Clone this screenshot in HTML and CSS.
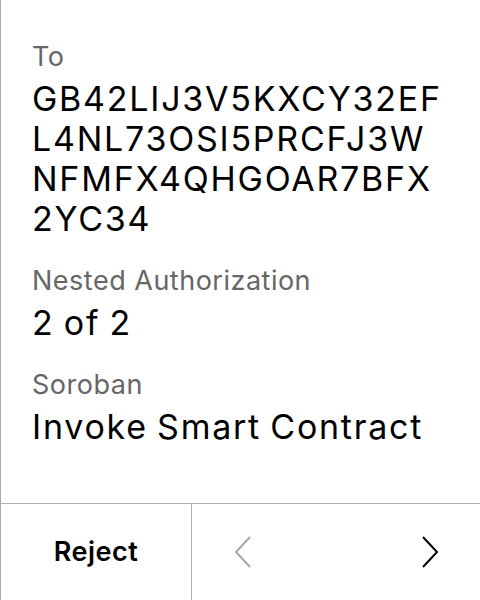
FILE: index.html
```html
<!DOCTYPE html>
<html>
<head>
<meta charset="utf-8">
<link rel="stylesheet" href="styles.css">
</head>
<body>
<div class="screen">
  <div class="content">
    <div class="field">
      <div class="label">To</div>
      <div class="value">GB42LIJ3V5KXCY32EF<br>L4NL73OSI5PRCFJ3W<br>NFMFX4QHGOAR7BFX<br>2YC34</div>
    </div>
    <div class="field">
      <div class="label">Nested Authorization</div>
      <div class="value">2 of 2</div>
    </div>
    <div class="field">
      <div class="label">Soroban</div>
      <div class="value">Invoke Smart Contract</div>
    </div>
  </div>
  <div class="footer">
    <div class="reject">Reject</div>
    <div class="nav">
      <svg class="chev" width="18" height="32" viewBox="0 0 18 32"><polyline points="16,1 2,16 16,31" fill="none" stroke="#a6a6a6" stroke-width="2"/></svg>
      <svg class="chev" width="18" height="32" viewBox="0 0 18 32"><polyline points="2,1 16,16 2,31" fill="none" stroke="#000" stroke-width="2"/></svg>
    </div>
  </div>
</div>
</body>
</html>
```
FILE: styles.css
```css
* { box-sizing: border-box; }
html, body { margin: 0; padding: 0; background: #fff; }
body { font-family: Inter, "Noto Sans", sans-serif; color: #000; }
.screen {
  width: 480px;
  height: 600px;
  border-left: 1px solid #a8a8a8;
  display: flex;
  flex-direction: column;
}
.content {
  flex: 1;
  padding: 41px 0 0 31px;
  display: flex;
  flex-direction: column;
  gap: 26px;
}
.field { display: flex; flex-direction: column; gap: 6px; }
.label {
  font-size: 27px;
  line-height: 32px;
  letter-spacing: 0.5px;
  color: #666;
}
.value {
  font-size: 34px;
  line-height: 40px;
  letter-spacing: 1.75px;
  word-spacing: -2px;
  color: #000;
}
.footer {
  height: 97px;
  border-top: 1px solid #b0b0b0;
  display: flex;
}
.reject {
  width: 191px;
  border-right: 1px solid #b0b0b0;
  display: flex;
  align-items: center;
  justify-content: center;
  font-size: 27px;
  font-weight: 600;
  letter-spacing: 0.5px;
  padding-bottom: 2px;
}
.nav {
  flex: 1;
  display: flex;
  align-items: center;
  justify-content: space-between;
  padding: 0 41px 0 42px;
}
.chev { display: block; }
```
